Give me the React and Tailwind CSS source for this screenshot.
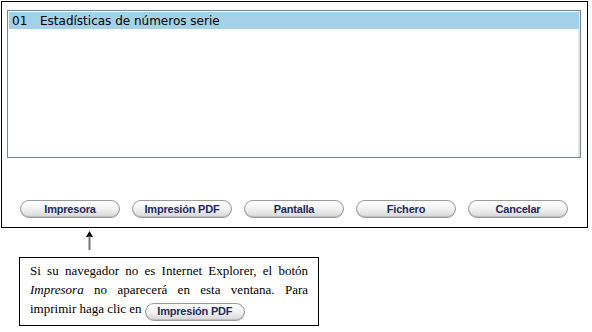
import React from "react";

function Btn({ label, className = "" }) {
  return (
    <div
      className={
        "flex h-[18px] w-[100px] items-center justify-center rounded-full border border-[#9a9a9a] bg-gradient-to-b from-white via-[#f1f1f1] to-[#d6d6d6] text-[11px] font-bold text-[#1d2b5c] shadow-[inset_0_-1px_0_#bdbdbd] " +
        className
      }
      style={{ fontFamily: "'Liberation Sans', Arial, sans-serif", letterSpacing: "-0.2px" }}
    >
      {label}
    </div>
  );
}

export default function App() {
  return (
    <div className="relative h-[332px] w-[592px] bg-white pl-[1px] pt-[1px]">
      <div className="flex h-[227px] w-[587px] flex-col border border-black pl-[5px] pr-[6px] pt-[8px]">
        <div className="h-[148px] w-[574px] border border-[#6f8797] p-[1px] shadow-[inset_-2px_0_0_#dfe6ea]">
          <div
            className="flex h-[17px] items-center bg-[#a3d1e6] pl-[3px] text-[12px] text-black"
            style={{ fontFamily: "'DejaVu Sans', Verdana, sans-serif" }}
          >
            <span className="w-[28px]">01</span>
            <span>Estadísticas de números serie</span>
          </div>
        </div>
        <div className="mt-[42px] flex gap-[12px] pl-[13px]">
          <Btn label="Impresora" />
          <Btn label="Impresión PDF" />
          <Btn label="Pantalla" />
          <Btn label="Fichero" />
          <Btn label="Cancelar" />
        </div>
      </div>
      <div className="ml-[85px] mt-[3px] flex w-[7px] flex-col items-center">
        <svg width="7" height="19" viewBox="0 0 7 19">
          <polygon points="3.5,0 7,6 0,6" fill="#000" />
          <rect x="2.5" y="5" width="2" height="14" fill="#777" />
        </svg>
      </div>
      <div
        className="ml-[18px] mt-[7px] w-[300px] border border-black px-[10px] pb-[4px] pt-[3px] text-justify text-[13px] leading-[19px] text-black"
        style={{ fontFamily: "'Liberation Serif', 'Times New Roman', serif", textAlignLast: "left" }}
      >
        Si su navegador no es Internet Explorer, el botón{" "}
        <span className="italic" style={{ fontFamily: "'Liberation Serif', 'DejaVu Serif', serif", fontStyle: "italic" }}>
          Impresora
        </span>{" "}
        no aparecerá en esta ventana. Para imprimir haga clic en{" "}
        <span className="inline-flex align-[-2px]">
          <Btn label="Impresión PDF" />
        </span>
      </div>
    </div>
  );
}
